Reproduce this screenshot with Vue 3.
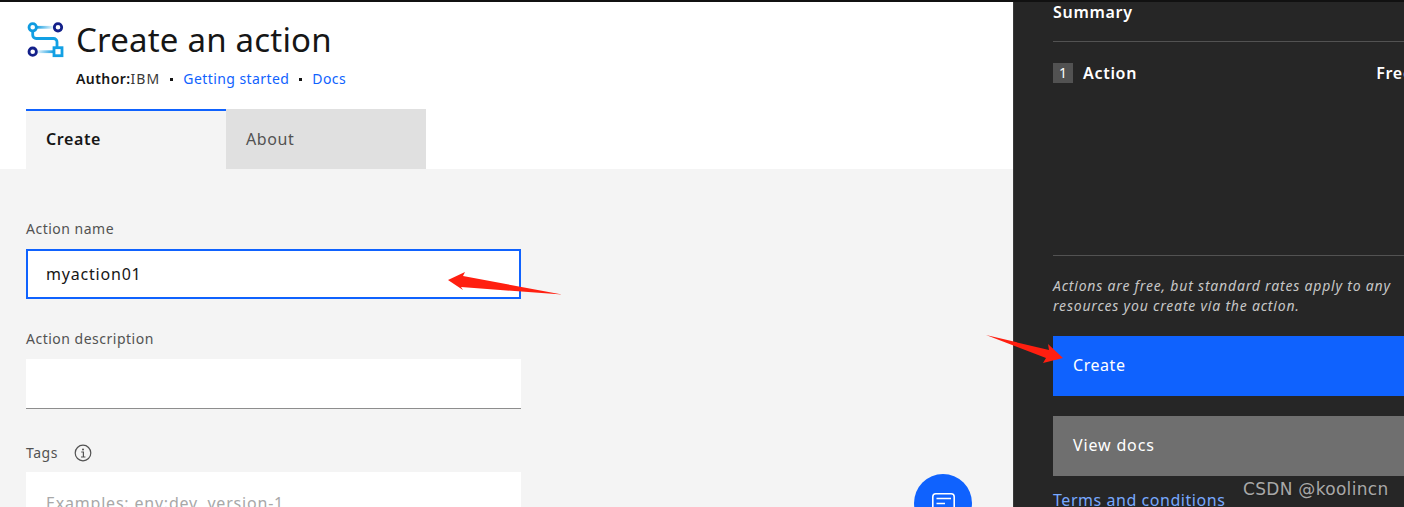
<script setup>
const fields = [
  { label: 'Action name', value: 'myaction01', focus: true },
  { label: 'Action description', value: '' },
]
</script>

<template>
  <div class="page">
    <main class="left">
      <header class="head">
        <div class="title-row">
          <svg class="logo" width="38" height="38" viewBox="0 0 38 38" fill="none">
            <defs>
              <linearGradient id="g1" gradientUnits="userSpaceOnUse" x1="10" x2="27" y1="0" y2="0">
                <stop offset="0" stop-color="#0f9be0" />
                <stop offset="1" stop-color="#0f9be0" stop-opacity="0.1" />
              </linearGradient>
              <linearGradient id="g2" gradientUnits="userSpaceOnUse" x1="11" x2="28" y1="0" y2="0">
                <stop offset="0" stop-color="#0f9be0" stop-opacity="0.1" />
                <stop offset="1" stop-color="#0f9be0" />
              </linearGradient>
            </defs>
            <path d="M6.7 9V14a3.5 3.5 0 0 0 3.5 3.5H27.5a3.5 3.5 0 0 1 3.5 3.5V27" stroke="#12a0e4" stroke-width="2.8" />
            <path d="M10 6.3H27" stroke="url(#g1)" stroke-width="2.8" />
            <path d="M11 30.7H28" stroke="url(#g2)" stroke-width="2.8" />
            <circle cx="6.7" cy="6.3" r="3.7" fill="#fff" stroke="#0f9be0" stroke-width="2.8" />
            <circle cx="32" cy="6.3" r="3.7" stroke="#13208a" stroke-width="2.8" />
            <circle cx="6.7" cy="30.7" r="3.7" stroke="#13208a" stroke-width="2.8" />
            <rect x="28" y="26.7" width="8" height="8" fill="#fff" stroke="#12a0e4" stroke-width="2.8" />
          </svg>
          <h1>Create an action</h1>
        </div>
        <div class="meta">
          <b>Author:</b><span class="ibm">IBM</span>
          <i class="dot"></i>
          <a>Getting started</a>
          <i class="dot"></i>
          <a>Docs</a>
        </div>
        <nav class="tabs">
          <div class="tab active">Create</div>
          <div class="tab">About</div>
        </nav>
      </header>

      <section class="form">
        <div v-for="f in fields" :key="f.label" class="field">
          <label>{{ f.label }}</label>
          <div class="input" :class="{ focus: f.focus }">{{ f.value }}</div>
        </div>
        <div class="field tags-field">
          <label class="tag-label">Tags
            <svg class="info" width="18" height="18" viewBox="0 0 18 18" fill="none">
              <circle cx="9" cy="9" r="7.8" stroke="#525252" stroke-width="1.2" />
              <path d="M7.2 8H9.4V13M7 13H11.4" stroke="#525252" stroke-width="1.2" />
              <circle cx="9" cy="5.4" r="1" fill="#525252" />
            </svg>
          </label>
          <div class="input tags">Examples: env:dev, version-1</div>
        </div>
        <button class="fab" aria-label="Feedback">
          <svg width="26" height="26" viewBox="0 0 26 26" fill="none">
            <rect x="2.8" y="1.8" width="21.4" height="21.4" rx="3" stroke="#fff" stroke-width="1.6" />
            <path d="M6.5 6.5H21M6.5 11.5H15" stroke="#fff" stroke-width="1.6" />
          </svg>
        </button>
      </section>
    </main>

    <aside class="side">
      <div class="inner">
        <h2>Summary</h2>
        <div class="items">
          <div class="item">
            <span class="badge">1</span>
            <span class="name">Action</span>
            <span class="price">Free</span>
          </div>
        </div>
        <p class="note">Actions are free, but standard rates apply to any resources you create via the action.</p>
        <div class="btn primary">Create</div>
        <div class="btn secondary">View docs</div>
        <a class="terms">Terms and conditions</a>
      </div>
    </aside>

    <svg class="arrows" width="1404" height="507" viewBox="0 0 1404 507">
      <path d="M448 280 L465 272 L463 276 L562 294.5 L461 287 L463 290 Z" fill="#ff1f10" />
      <path d="M986 335 L1049 350 L1048 344 L1063 358 L1043 363 L1046 358 Z" fill="#ff1f10" />
    </svg>
    <div class="mark">CSDN @koolincn</div>
  </div>
</template>

<style>
html, body { margin: 0; padding: 0; overflow: hidden; }
</style>

<style scoped>
.page {
  position: relative;
  width: 1404px;
  height: 507px;
  overflow: hidden;
  display: flex;
  border-top: 2px solid #111;
  box-sizing: border-box;
  font-family: "Noto Sans", "Liberation Sans", sans-serif;
  color: #161616;
}
.left { width: 1013px; flex: none; background: #fff; display: flex; flex-direction: column; }
.head { padding: 18px 0 0 26px; }
.title-row { display: flex; align-items: center; gap: 12px; height: 40px; }
.logo { flex: none; }
h1 { margin: 0; font-size: 33px; font-weight: 400; line-height: 40px; letter-spacing: 0.2px; }
.meta { margin: 9px 0 0 50px; height: 20px; font-size: 14px; line-height: 20px; display: flex; align-items: center; letter-spacing: 0.42px; }
.meta b { font-weight: 600; }
.ibm { color: #393939; letter-spacing: 1.1px; }
.meta a { color: #0f62fe; }
.dot { width: 3px; height: 3px; background: #161616; margin: 0 10px; }
.tabs { display: flex; margin-top: 20px; }
.tab { width: 200px; height: 60px; box-sizing: border-box; padding-left: 20px; background: #e0e0e0; color: #525252; font-size: 16px; line-height: 60px; letter-spacing: 0.6px; }
.tab.active { background: #f4f4f4; border-top: 2px solid #0f62fe; color: #161616; font-weight: 600; line-height: 56px; }
.form { position: relative; flex: 1; background: #f4f4f4; padding: 50px 0 0 26px; }
.field { width: 495px; margin-bottom: 30px; }
.tags-field { margin-top: 34px; }
label { display: block; font-size: 14px; line-height: 20px; color: #525252; margin-bottom: 10px; letter-spacing: 0.5px; }
.input { height: 50px; box-sizing: border-box; padding-left: 20px; background: #fff; border-bottom: 1px solid #8d8d8d; font-size: 16px; line-height: 50px; letter-spacing: 0.8px; }
.input.focus { border: 2px solid #0f62fe; padding-left: 18px; line-height: 46px; }
.tag-label { display: flex; align-items: center; gap: 16px; margin-bottom: 9px; }
.tags { height: 62px; line-height: 62px; color: #a8a8a8; }
.fab { position: absolute; left: 914px; top: 305px; width: 58px; height: 58px; border: 0; border-radius: 50%; background: #0f62fe; padding: 4px 0 0; display: flex; align-items: center; justify-content: center; }
.side { width: 391px; flex: none; background: #262626; color: #fff; overflow: hidden; padding-left: 40px; box-sizing: border-box; border-left: 1px solid #393939; }
.inner { width: 360px; margin-left: -1px; }
h2 { margin: 0; font-size: 16px; font-weight: 600; line-height: 20px; height: 39px; border-bottom: 1px solid #525252; letter-spacing: 0.7px; }
.items { height: 214px; border-bottom: 1px solid #525252; box-sizing: border-box; padding-top: 21px; }
.item { display: flex; align-items: center; height: 20px; font-size: 16px; font-weight: 600; letter-spacing: 0.7px; }
.badge { width: 20px; height: 20px; background: #525252; font-size: 14px; font-weight: 400; line-height: 20px; text-align: center; margin-right: 10px; letter-spacing: 0; }
.price { margin-left: auto; }
.note { margin: 20px 0 20px; font-size: 14px; line-height: 20px; font-style: italic; color: #c6c6c6; height: 40px; letter-spacing: 0.8px; }
.btn { height: 60px; padding-left: 20px; font-size: 16px; line-height: 58px; margin-bottom: 20px; letter-spacing: 0.55px; }
.primary { background: #0f62fe; }
.secondary { background: #6f6f6f; letter-spacing: 0.85px; }
.terms { display: block; margin-top: -6px; font-size: 16px; line-height: 20px; color: #78a9ff; letter-spacing: 0.55px; white-space: nowrap; }
.arrows { position: absolute; left: 0; top: -2px; pointer-events: none; }
.mark { position: absolute; left: 1243px; top: 475px; font-family: "DejaVu Sans", sans-serif; font-size: 17px; line-height: 24px; color: #a8a8a8; letter-spacing: 0.3px; text-shadow: 1px 1px 1px #222; white-space: nowrap; }
</style>
